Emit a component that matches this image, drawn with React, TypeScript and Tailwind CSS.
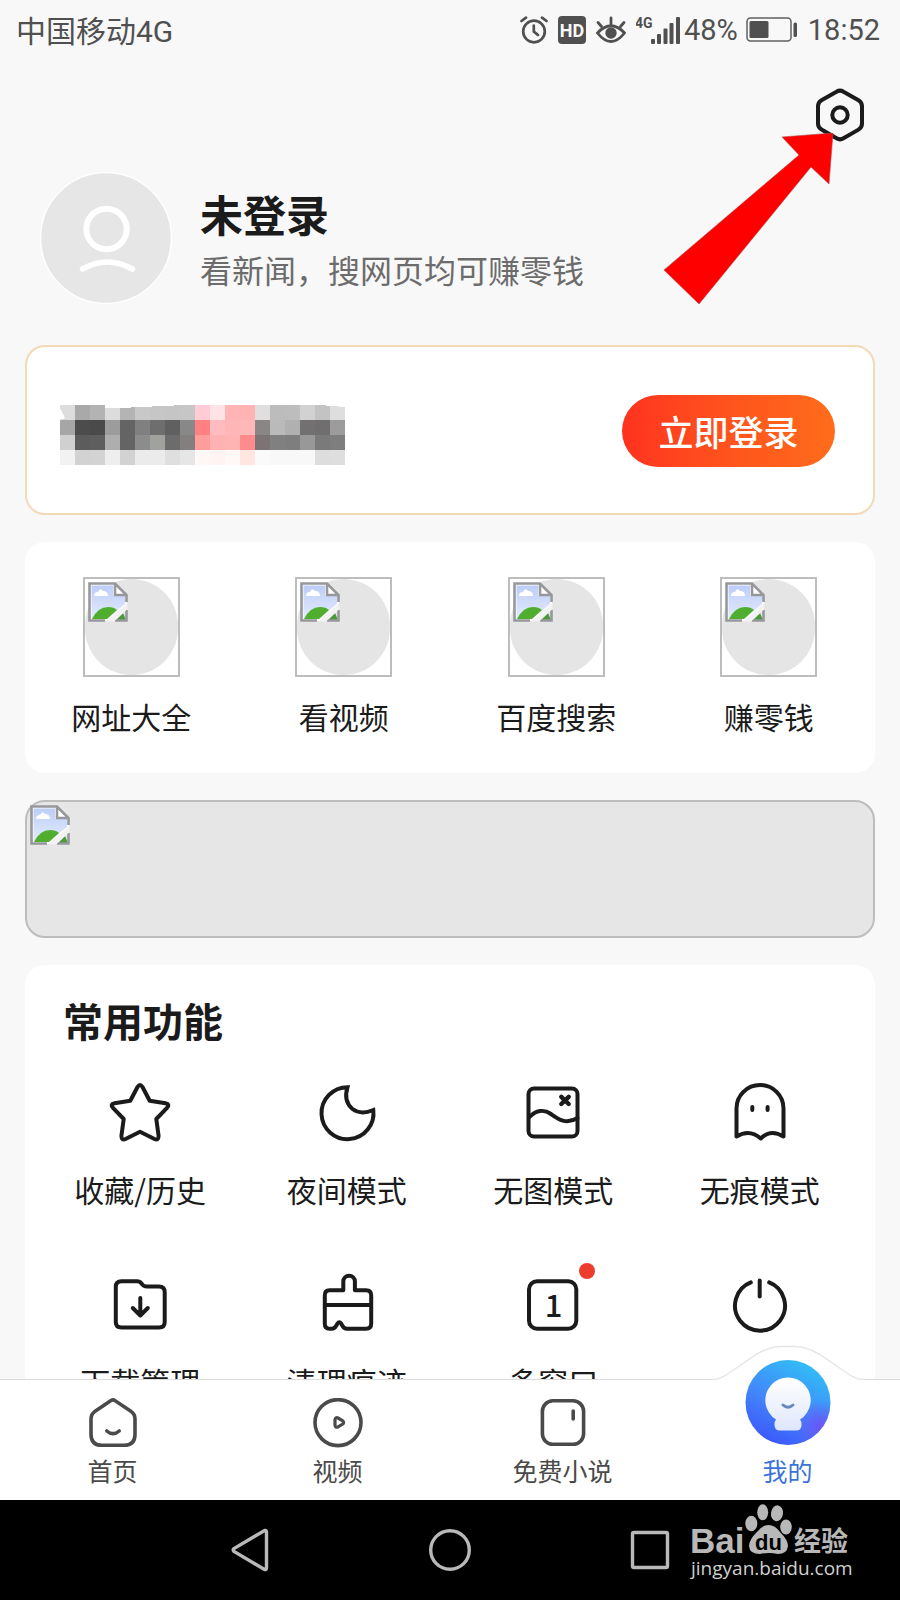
import { useState } from "react";
import type { ReactNode } from "react";

/* Censored promo text: one colour per 15px cell */
const MOSAIC = [
  ["#dddddd", "#a9a9a9", "#b3b3b3", "#dcdcdc", "#b4b4b4", "#c8c8c8", "#c6c6c6", "#c5c5c5", "#c6c6c6", "#ffccd6", "#ffe2e6", "#ffb5b5", "#ffb3b3", "#e0dede", "#bcbcbc", "#bdbdbd", "#d2d2d2", "#c3c3c3", "#dedede"],
  ["#a6a6a6", "#4c4c4c", "#4a4a4a", "#9c9c9c", "#646464", "#808080", "#6e6e6e", "#606060", "#888888", "#ff8080", "#ffbcc0", "#ffb6b6", "#ffb8b8", "#8a8686", "#bababa", "#b0b0b0", "#727070", "#706e6e", "#9c9c9c"],
  ["#d0d0d0", "#5c5c5c", "#5e5e5e", "#aeaeae", "#646464", "#8c8c8c", "#a0a29e", "#6c6c6c", "#837f7f", "#ff9c9c", "#ffb2b2", "#ffb4b4", "#ff8c8c", "#7c7474", "#808080", "#7e7e7e", "#989898", "#7a7a7a", "#7e7e7e"],
  ["#f2f2f2", "#d2d2d2", "#d3d3d3", "#eeeeee", "#d2d2d2", "#ebebeb", "#ebebeb", "#dfdfdf", "#e6e6e6", "#fff8f6", "#fff4f2", "#fff8f6", "#ffe6e0", "#fafafa", "#f8f8f8", "#f8f8f8", "#f8f8f8", "#dddddd", "#dedede"],
];

const SHORTCUTS = ["网址大全", "看视频", "百度搜索", "赚零钱"];

const TOOLS: { label: string; dot?: boolean; icon: ReactNode }[] = [
  {
    label: "收藏/历史",
    icon: (
      <path d="M27.5 4Q30 0 32.5 4L39.7 17.8L55.5 20.3Q60.3 21 57 24.8L46.3 36L48.6 53Q48.5 57.6 44.5 56L30 48.8L15.5 56Q11.5 57.6 11.4 53L13.7 36L3 24.8Q-0.3 21 4.5 20.3L20.3 17.8Z" />
    ),
  },
  {
    label: "夜间模式",
    icon: <path strokeLinejoin="miter" d="M30.5 4.2A26 26 0 1 0 56.3 27C48 30.5 41.5 30.5 35.5 26C29.5 21 27.5 14 30.5 4.2Z" />,
  },
  {
    label: "无图模式",
    icon: (
      <>
        <rect x="5.5" y="5.5" width="49" height="48" rx="5.5" />
        <path d="M6 34.5C13 27 21 26 28 31S43 42 54.5 35" />
        <path strokeWidth="4.4" d="M38.3 13.8L45.7 21M45.7 13.8L38.3 21" />
      </>
    ),
  },
  {
    label: "无痕模式",
    icon: (
      <>
        <path d="M6.5 53.5V25.5A23.5 23.5 0 0 1 53.5 25.5V53.5Q40.5 45.5 30.8 55.5Q19.5 45.5 6.5 53.5Z" />
        <path d="M22.3 24V27M37.6 24V27" />
      </>
    ),
  },
  {
    label: "下载管理",
    icon: (
      <>
        <path d="M5.8 12Q5.8 6.3 11.5 6.3H27Q30 6.3 31.5 8.5Q33.5 11.6 37 11.6H49Q54.7 11.6 54.7 17.3V47Q54.7 52.6 49 52.6H11.5Q5.8 52.6 5.8 47Z" />
        <path d="M30.3 23V40.5M22.8 33L30.3 40.5L37.8 33" />
      </>
    ),
  },
  {
    label: "清理痕迹",
    icon: (
      <>
        <path d="M26.3 15.3V6.5A5.8 5.8 0 0 1 37.9 6.5V15.3H49Q54.2 15.3 54.2 20.5V48.5Q54.2 53.8 49 53.8H30Q27 53.8 25.4 50.8L24.2 48.7Q22.3 46 20.4 48.7L19.2 50.8Q17.5 53.8 14.5 53.8H12.5Q7.8 53.8 7.8 48.5V20.5Q7.8 15.3 12.5 15.3Z" />
        <path d="M7.8 30H54" />
      </>
    ),
  },
  {
    label: "多窗口",
    dot: true,
    icon: (
      <>
        <rect x="6" y="6.3" width="47.3" height="47.4" rx="8" />
        <text x="30.5" y="41.5" textAnchor="middle" fontSize="31" fontWeight="500" fill="#1b1b1b" stroke="none">
          1
        </text>
      </>
    ),
  },
  {
    label: "退出",
    icon: (
      <>
        <path d="M20.8 7.4A25 25 0 1 0 39.2 7.4" />
        <path d="M29.7 5.5V21.5" />
      </>
    ),
  },
];

const TABS: { label: string; icon: ReactNode }[] = [
  {
    label: "首页",
    icon: (
      <>
        <path d="M23 2.6Q25 1.2 27 2.6L42.5 13Q47 16 47 21V36.5Q47 47.3 36 47.3H14Q3 47.3 3 36.5V21Q3 16 7.5 13Z" />
        <path d="M18.8 33Q25 38.4 31.2 33" />
      </>
    ),
  },
  {
    label: "视频",
    icon: (
      <>
        <circle cx="25" cy="24.6" r="23" />
        <path strokeWidth="3.2" d="M22 21.6Q22.3 19 25 20L29.8 22.8Q31.4 24.4 29.8 26L25 28.9Q22.3 30 22 27.4Z" />
      </>
    ),
  },
  {
    label: "免费小说",
    icon: (
      <>
        <rect x="4.4" y="2.8" width="41.2" height="43.5" rx="10.5" />
        <path d="M35.2 13V21" />
      </>
    ),
  },
];

function BrokenImage() {
  return (
    <svg viewBox="0 0 40 40" className="h-10 w-10 shrink-0" fill="none">
      <defs>
        <linearGradient id="sky" x1="0" y1="0" x2="0" y2="1">
          <stop offset="0" stopColor="#bccdf8" />
          <stop offset="1" stopColor="#e3ebfc" />
        </linearGradient>
      </defs>
      <path d="M1 1H27L39 13V22L23 39H1Z" fill="#fff" />
      <path d="M3.5 3.5H25V14H37V22L20 36H3.5Z" fill="url(#sky)" />
      <path d="M6 14Q6 10 10 10Q12 5 15 9Q20 9 20 14Z" fill="#fff" />
      <path d="M4 37Q10 25 20 25Q26 25 29 28L19 37Z" fill="#4fae2e" />
      <path d="M28 38L35 31L38 38Z" fill="#4a9a3a" />
      <path d="M17 38.5H1.5V1.5H27L38.5 13V20M27 2V13H38M38.5 28V38.5H27" stroke="#97989b" strokeWidth="2.6" />
      <path d="M18 39.5L39.5 21V27L26 39.5Z" fill="#f1f2f1" />
    </svg>
  );
}

function StatusBar() {
  return (
    <header className="flex h-16 items-center justify-between pr-5 pl-4 text-[29px] leading-[40px] text-[#505050]">
      <span className="font-[Roboto,'Noto_Sans_CJK_SC',sans-serif] text-[30px]">中国移动4G</span>
      <div className="flex items-center pb-1 font-[Roboto,sans-serif]">
        <svg viewBox="0 0 28 28" className="mr-2.5 h-7 w-7" fill="none" stroke="#505050" strokeWidth="2.7" strokeLinecap="round">
          <circle cx="14" cy="15.5" r="10.8" />
          <path d="M13.8 9.5V15.5L18 19M1.5 5L6 1.6M26.5 5L22 1.6" />
        </svg>
        <svg viewBox="0 0 28 28" className="mr-2.5 h-7 w-7">
          <rect width="28" height="28" rx="4" fill="#505050" />
          <text x="14" y="20.5" textAnchor="middle" fontSize="18" fontWeight="700" fill="#f8f8f8">HD</text>
        </svg>
        <svg viewBox="0 0 30 28" className="mr-2.5 h-7 w-[30px]" fill="none" stroke="#505050" strokeWidth="2.8" strokeLinecap="round">
          <path d="M1.5 17Q15 2.5 28.5 17Q15 34 1.5 17Z" />
          <path d="M15 2V8M2 6.5L5.5 10.5M28 6.5L24.5 10.5" />
          <circle cx="15" cy="17" r="4.3" fill="#505050" />
        </svg>
        <svg viewBox="0 0 44 28" className="mr-1 h-7 w-11" fill="#505050">
          <text x="-1" y="12" fontSize="14" fontWeight="700">4G</text>
          <rect x="15" y="23" width="4" height="5" rx="1" />
          <rect x="21" y="18" width="4" height="10" rx="1" />
          <rect x="27.5" y="12.5" width="4" height="15.5" rx="1" />
          <rect x="33.5" y="7" width="4" height="21" rx="1" />
          <rect x="40" y="1" width="4" height="27" rx="1" />
        </svg>
        <span>48%</span>
        <svg viewBox="0 0 52 26" className="mr-2.5 ml-2 h-[26px] w-[52px]">
          <rect x="1" y="1" width="44" height="23" rx="3.5" fill="none" stroke="#606060" strokeWidth="1.5" />
          <rect x="3.5" y="4" width="19" height="17" rx="1.5" fill="#505050" />
          <rect x="47.5" y="5.5" width="3.5" height="14.5" rx="1.5" fill="#505050" />
        </svg>
        <span>18:52</span>
      </div>
    </header>
  );
}

function Profile() {
  return (
    <section className="relative pt-6">
      <div className="flex justify-end pr-9">
        <button type="button" aria-label="设置">
          <svg viewBox="0 0 48 54" className="h-[54px] w-12" fill="none" stroke="#1b1b1b" strokeWidth="4">
            <path d="M20.5 3.7Q24 1.5 27.5 3.7L42.5 12.3Q46 14.3 46 18.5V35.5Q46 39.5 42.5 41.6L27.5 50.3Q24 52.5 20.5 50.3L5.5 41.6Q2 39.5 2 35.5V18.5Q2 14.3 5.5 12.3Z" />
            <circle cx="24" cy="27" r="7.7" />
          </svg>
        </button>
      </div>
      {/* Pointer towards the settings button */}
      <svg viewBox="0 0 170 172" className="pointer-events-none absolute top-[69px] right-[66px] h-[172px] w-[170px]">
        <path d="M169 0L118 4L135 22L0 137L35 171L147 34L165 51Z" fill="#fe0000" stroke="#b05050" strokeWidth="0.6" />
      </svg>
      <div className="mt-[30px] flex items-center pl-10">
        <svg viewBox="0 0 132 132" className="h-[132px] w-[132px]" fill="none" stroke="#fff" strokeLinecap="round">
          <circle cx="66" cy="66" r="66" fill="#e6e6e6" stroke="none" />
          <circle cx="66" cy="66" r="65.5" strokeWidth="1.5" />
          <circle cx="66.5" cy="57" r="20.2" strokeWidth="6" />
          <path d="M42.5 97Q67 83 92.5 97" strokeWidth="5.5" />
        </svg>
        <div className="ml-7 pt-1.5">
          <h1 className="text-[43px] leading-[56px] font-bold text-[#1b1b1b]">未登录</h1>
          <p className="text-[32px] leading-[56px] text-[#6c6c6c]">看新闻，搜网页均可赚零钱</p>
        </div>
      </div>
    </section>
  );
}

function LoginCard() {
  return (
    <section className="flex items-center justify-between rounded-[20px] border-2 border-[#f3d9b5] bg-white pt-12 pr-[38px] pb-[46px] pl-[33px]">
      <svg viewBox="0 0 285 60" className="mt-2 h-[60px] w-[285px]" shapeRendering="crispEdges">
        {MOSAIC.map((row, y) =>
          row.map((fill, x) => <rect key={`${x}-${y}`} x={x * 15} y={y * 15} width="15" height="15" fill={fill} />)
        )}
        <path d="M45 0H125L60 3H45ZM0 3L5 13L0 15ZM260 0H285V2Z" fill="#fff" />
      </svg>
      <button
        type="button"
        className="h-[72px] w-[213px] rounded-full bg-linear-to-r from-[#ff311f] to-[#ff6c1b] text-[35px] leading-[48px] font-medium text-white"
      >
        立即登录
      </button>
    </section>
  );
}

function Shortcuts() {
  return (
    <section className="grid grid-cols-4 rounded-[20px] bg-white pt-[35px] pb-[37px]">
      {SHORTCUTS.map((label) => (
        <a key={label} href="#" className="flex flex-col items-center">
          <span className="h-[100px] w-[97px] border-2 border-[#bdbdbd]">
            <span className="flex h-full w-full rounded-full bg-[#e6e5e6] p-[3px]">
              <BrokenImage />
            </span>
          </span>
          <span className="mt-[19px] text-[30px] leading-[40px] text-[#1b1b1b]">{label}</span>
        </a>
      ))}
    </section>
  );
}

function Tools() {
  return (
    <section className="rounded-[20px] bg-white pt-[31px]">
      <h2 className="pl-[38px] text-[40px] leading-[48px] font-bold text-[#1b1b1b]">常用功能</h2>
      <div className="mt-[39px] grid grid-cols-4 gap-y-[66px] px-3">
        {TOOLS.map(({ label, dot, icon }) => (
          <button key={label} type="button" className="flex flex-col items-center">
            <span className="relative">
              <svg
                viewBox="0 0 60 60"
                className="h-[60px] w-[60px] overflow-visible"
                fill="none"
                stroke="#1b1b1b"
                strokeWidth="4"
                strokeLinecap="round"
                strokeLinejoin="round"
              >
                {icon}
              </svg>
              {dot && <span className="absolute -top-3 -right-3 h-4 w-4 rounded-full bg-[#ee3c2c]" />}
            </span>
            <span className="mt-[26px] text-[30px] leading-[40px] text-[#1b1b1b]">{label}</span>
          </button>
        ))}
      </div>
    </section>
  );
}

function MineIcon() {
  return (
    <svg viewBox="0 0 170 102" className="pointer-events-none absolute bottom-[53px] left-1/2 h-[102px] w-[170px] -translate-x-1/2">
      <defs>
        <linearGradient id="mine" x1="0.75" y1="0.05" x2="0.3" y2="1">
          <stop offset="0" stopColor="#32bdf6" />
          <stop offset="0.55" stopColor="#4285fa" />
          <stop offset="1" stopColor="#3c56fa" />
        </linearGradient>
        <radialGradient id="violet" cx="0.88" cy="0.78" r="0.3">
          <stop offset="0" stopColor="#6a55f6" />
          <stop offset="1" stopColor="#6a55f6" stopOpacity="0" />
        </radialGradient>
        <linearGradient id="bulb" x1="0" y1="0" x2="0" y2="1">
          <stop offset="0" stopColor="#fff" />
          <stop offset="1" stopColor="#dfe7fd" />
        </linearGradient>
      </defs>
      <path d="M8 34.5Q18 34.5 26 28L54 9Q67 1.5 78 1.5H92Q103 1.5 116 9L144 28Q152 34.5 162 34.5V42H8Z" fill="#fff" />
      <path d="M8 34.5Q18 34.5 26 28L54 9Q67 1.5 78 1.5H92Q103 1.5 116 9L144 28Q152 34.5 162 34.5" fill="none" stroke="#e6e6e6" strokeWidth="1.5" />
      <circle cx="85" cy="57.5" r="42.5" fill="url(#mine)" />
      <circle cx="85" cy="57.5" r="42.5" fill="url(#violet)" />
      <path d="M73 74.5A22.7 22.7 0 1 1 97 74.5Q98.5 76 98.5 80Q98.5 85.5 93 85.5H77Q71.5 85.5 71.5 80Q71.5 76 73 74.5Z" fill="url(#bulb)" />
      <path d="M80 60Q85 64.5 90 60" fill="none" stroke="#6689bd" strokeWidth="3" strokeLinecap="round" />
    </svg>
  );
}

function TabBar() {
  const [active, setActive] = useState("我的");
  const color = (label: string) => (active === label ? "text-[#3b73d8]" : "text-[#4a4a4a]");

  return (
    <nav className="relative grid grid-cols-4 border-t border-[#dcdcdc] bg-white text-[25px] leading-[32px]">
      {TABS.map(({ label, icon }) => (
        <button
          key={label}
          type="button"
          onClick={() => setActive(label)}
          className={`flex flex-col items-center pt-[18px] pb-3.5 ${color(label)}`}
        >
          <svg viewBox="0 0 50 50" className="h-[50px] w-[50px]" fill="none" stroke="currentColor" strokeWidth="3.6" strokeLinecap="round" strokeLinejoin="round">
            {icon}
          </svg>
          <span className="mt-1.5">{label}</span>
        </button>
      ))}
      <button
        type="button"
        onClick={() => setActive("我的")}
        className={`relative flex flex-col items-center justify-end pb-3.5 ${color("我的")}`}
      >
        <MineIcon />
        <span>我的</span>
      </button>
    </nav>
  );
}

function SystemBar() {
  return (
    <footer className="relative flex h-[100px] items-center justify-center bg-black">
      {[
        { name: "返回", shape: <path d="M5 19.5Q3.5 21 5 22.5L35.5 40.5Q37.5 41 37.5 39V3Q37.5 1 35.5 1.5Z" /> },
        { name: "主屏幕", shape: <circle cx="21" cy="21" r="19.3" /> },
        { name: "最近任务", shape: <rect x="3.5" y="3.5" width="35" height="35" rx="1.5" /> },
      ].map(({ name, shape }) => (
        <button key={name} type="button" aria-label={name} className="flex w-[200px] justify-center">
          <svg viewBox="0 0 42 42" className="h-[42px] w-[42px] overflow-visible" fill="none" stroke="#b9b9b9" strokeWidth="3.4">
            {shape}
          </svg>
        </button>
      ))}
      {/* Baidu Jingyan mark */}
      <svg viewBox="0 0 166 80" className="absolute top-1 right-11 h-20 w-[166px]" fill="#b8b8b8">
        <text x="0" y="49" fontSize="35" fontWeight="700" className="font-['Liberation_Sans',sans-serif]">Bai</text>
        <ellipse cx="61.3" cy="19.5" rx="6" ry="7.8" />
        <ellipse cx="72.7" cy="8.3" rx="5.5" ry="8" />
        <ellipse cx="87" cy="9.3" rx="6" ry="8" transform="rotate(8 87 9.3)" />
        <ellipse cx="96" cy="23" rx="5.8" ry="7.5" />
        <path d="M78.5 21Q85 21 90 28Q98 36 98 42Q97 50 88 50Q79 48 70 50Q59.5 50 59 42Q59.5 35 67 28Q72 21 78.5 21Z" />
        <text x="78.5" y="46" textAnchor="middle" fontSize="22" fontWeight="700" fill="#000" className="font-['Liberation_Sans',sans-serif]">du</text>
        <text x="104" y="47" fontSize="27" fontWeight="700">经验</text>
        <text x="1" y="71" fontSize="19" fill="#d0d0d0" className="font-['Open_Sans',sans-serif]">jingyan.baidu.com</text>
      </svg>
    </footer>
  );
}

export default function App() {
  return (
    <div className="flex h-screen flex-col overflow-hidden bg-[#f8f8f9] font-['Noto_Sans_CJK_SC',sans-serif]">
      <StatusBar />
      <main className="min-h-0 flex-1 overflow-hidden">
        <Profile />
        <div className="mt-[41px] flex flex-col gap-[27px] px-[25px]">
          <LoginCard />
          <Shortcuts />
          <section className="h-[138px] rounded-[20px] border-2 border-[#bdbdbd] bg-[#e6e6e6] p-[3px]">
            <BrokenImage />
          </section>
          <Tools />
        </div>
      </main>
      <TabBar />
      <SystemBar />
    </div>
  );
}
